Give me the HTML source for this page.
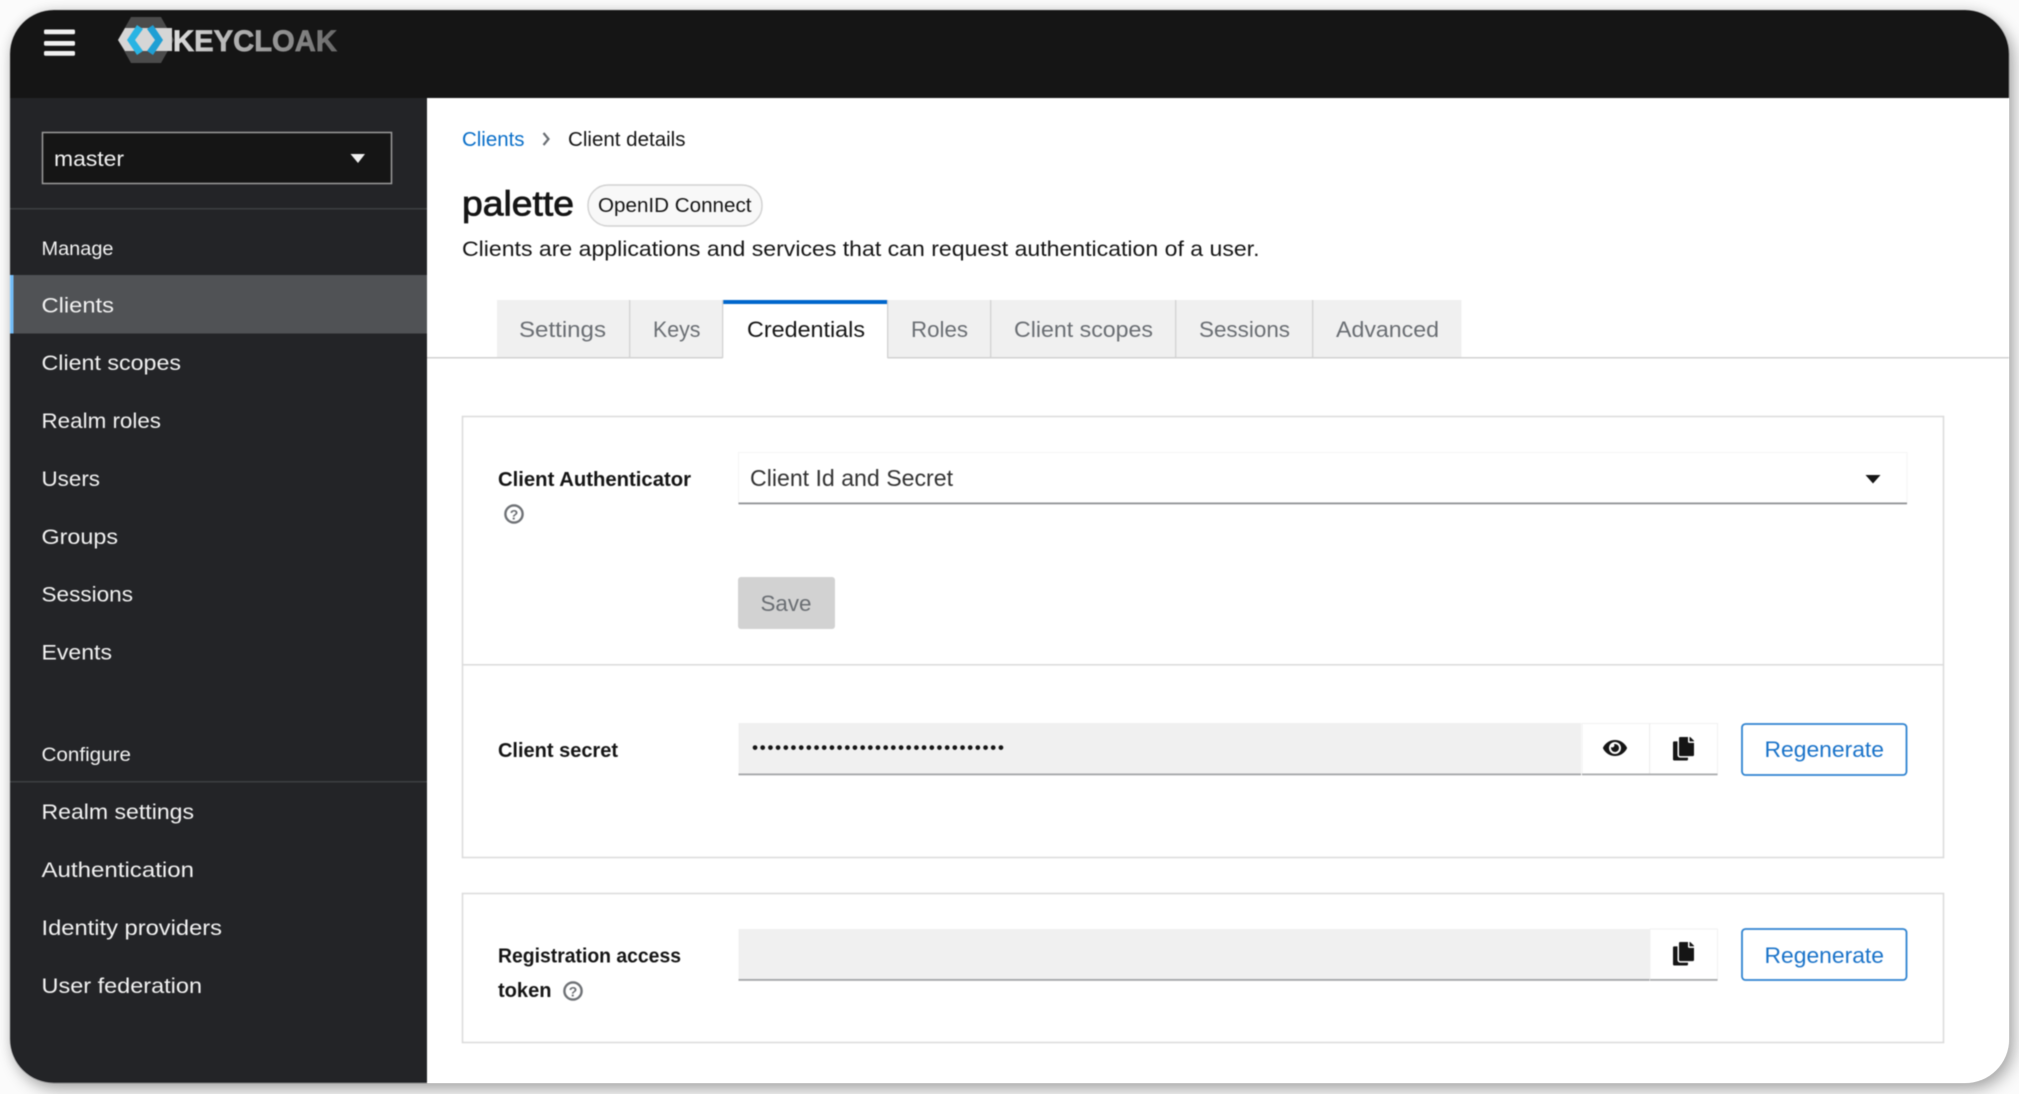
<!DOCTYPE html>
<html><head><meta charset="utf-8"><title>Keycloak client credentials</title>
<style>
html,body{margin:0;padding:0;width:2019px;height:1094px;background:#fbfbfb;overflow:hidden}
#shadow{position:absolute;left:10px;top:10px;width:1999px;height:1073px;border-radius:44px;background:#fff;box-shadow:5px 7px 16px rgba(0,0,0,.3),0 0 12px rgba(0,0,0,.1)}
svg{position:absolute;left:0;top:0;filter:blur(.4px)}
text{font-family:"Liberation Sans",sans-serif;font-size:21.5px}
.n{fill:#f2f2f2}.t{fill:#6a6e73}.b{font-weight:700;font-size:20px;fill:#151515}.d{fill:#151515}
</style></head><body>
<div id="shadow"></div>
<svg width="2019" height="1094" viewBox="0 0 2019 1094" xmlns="http://www.w3.org/2000/svg">
<defs>
<clipPath id="win"><rect x="10" y="10" width="1999" height="1073" rx="44"/></clipPath>
<linearGradient id="kc" gradientUnits="userSpaceOnUse" x1="173" y1="0" x2="337" y2="0"><stop offset="0" stop-color="#dcdcdc"/><stop offset="1" stop-color="#6a6a6a"/></linearGradient>
<path id="copy" d="M320 448v40c0 13.255-10.745 24-24 24H24c-13.255 0-24-10.745-24-24V120c0-13.255 10.745-24 24-24h72v296c0 30.879 25.121 56 56 56h168zm0-344V0H152c-13.255 0-24 10.745-24 24v368c0 13.255 10.745 24 24 24h272c13.255 0 24-10.745 24-24V128H344c-13.2 0-24-10.8-24-24zm120.971-31.029L375.029 7.029A24 24 0 0 0 358.059 0H352v96h96v-6.059a24 24 0 0 0-7.029-16.97z"/>
</defs>
<g clip-path="url(#win)">
<rect x="10" y="10" width="1999" height="1073" fill="#fff"/>
<rect x="10" y="10" width="1999" height="88" fill="#151515"/>
<rect x="10" y="98" width="417" height="985" fill="#232427"/>

<!-- hamburger -->
<rect x="44" y="29.5" width="31" height="4.8" rx="1.5" fill="#f0f0f0"/>
<rect x="44" y="41" width="31" height="4.8" rx="1.5" fill="#f0f0f0"/>
<rect x="44" y="51" width="31" height="4.8" rx="1.5" fill="#f0f0f0"/>

<!-- logo -->
<polygon points="118,40 131,17 161,17 174,40 161,63 131,63" fill="#4b4b4b"/>
<polygon points="118,40 125,28 172,28 172,51 125,51" fill="#d6d6d6"/>
<polygon points="127,40 137,25 143,29 135,40 143,51 137,55" fill="#29b4e3"/>
<polygon points="163,40 153,25 147,29 155,40 147,51 153,55" fill="#1f9fd4"/>
<text x="173" y="51" font-weight="700" stroke="url(#kc)" stroke-width=".7" style="font-size:30px" fill="url(#kc)" textLength="164" lengthAdjust="spacingAndGlyphs">KEYCLOAK</text>

<!-- realm select -->
<rect x="42.5" y="132.5" width="349" height="51" fill="#151515" stroke="#9c9c9c" stroke-width="1.5"/>
<text class="n" x="54" y="166" textLength="70" lengthAdjust="spacingAndGlyphs">master</text>
<polygon points="350.5,154 365,154 358,163" fill="#f0f0f0"/>
<rect x="10" y="208" width="417" height="1.5" fill="#3c3f42"/>
<text class="n" x="41.5" y="255" style="font-size:19.5px" textLength="72" lengthAdjust="spacingAndGlyphs">Manage</text>

<!-- nav -->
<rect x="10" y="275" width="417" height="58.5" fill="#505255"/>
<rect x="10" y="275" width="3.5" height="58.5" fill="#73bcf7"/>
<text class="n" x="41.5" y="312.5" textLength="72.5" lengthAdjust="spacingAndGlyphs">Clients</text>
<text class="n" x="41.5" y="370" textLength="139.5" lengthAdjust="spacingAndGlyphs">Client scopes</text>
<text class="n" x="41.5" y="428" textLength="119.5" lengthAdjust="spacingAndGlyphs">Realm roles</text>
<text class="n" x="41.5" y="486" textLength="58.5" lengthAdjust="spacingAndGlyphs">Users</text>
<text class="n" x="41.5" y="544" textLength="76.5" lengthAdjust="spacingAndGlyphs">Groups</text>
<text class="n" x="41.5" y="601.5" textLength="91.5" lengthAdjust="spacingAndGlyphs">Sessions</text>
<text class="n" x="41.5" y="659.5" textLength="70.5" lengthAdjust="spacingAndGlyphs">Events</text>
<text class="n" x="41.5" y="761" style="font-size:19.5px" textLength="89.5" lengthAdjust="spacingAndGlyphs">Configure</text>
<rect x="10" y="781" width="417" height="1.5" fill="#3c3f42"/>
<text class="n" x="41.5" y="819" textLength="152.5" lengthAdjust="spacingAndGlyphs">Realm settings</text>
<text class="n" x="41.5" y="877" textLength="152.5" lengthAdjust="spacingAndGlyphs">Authentication</text>
<text class="n" x="41.5" y="935" textLength="180.5" lengthAdjust="spacingAndGlyphs">Identity providers</text>
<text class="n" x="41.5" y="993" textLength="160.5" lengthAdjust="spacingAndGlyphs">User federation</text>

<!-- breadcrumb -->
<text x="462" y="146" fill="#0a6fc9" style="font-size:20.5px" textLength="62.5" lengthAdjust="spacingAndGlyphs">Clients</text>
<polyline points="543.5,133 548.5,139 543.5,145" fill="none" stroke="#6a6e73" stroke-width="2.2"/>
<text class="d" x="568" y="146" style="font-size:20.5px" textLength="117.5" lengthAdjust="spacingAndGlyphs">Client details</text>

<!-- title -->
<text class="d" x="462" y="215.5" style="font-size:35px" stroke="#151515" stroke-width=".8" textLength="112" lengthAdjust="spacingAndGlyphs">palette</text>
<rect x="588" y="185" width="174" height="41" rx="20" fill="#f8f8f8" stroke="#d2d2d2" stroke-width="1.5"/>
<text class="d" x="598" y="212" style="font-size:20.5px" textLength="153.5" lengthAdjust="spacingAndGlyphs">OpenID Connect</text>
<text x="462" y="256" fill="#151515" textLength="797.5" lengthAdjust="spacingAndGlyphs">Clients are applications and services that can request authentication of a user.</text>

<!-- tabs -->
<rect x="427" y="357" width="1582" height="1.5" fill="#d2d2d2"/>
<rect x="497" y="300" width="964.5" height="57" fill="#f0f0f0"/>
<rect x="722.5" y="300" width="165" height="59" fill="#fff"/>
<rect x="722.5" y="300" width="165" height="4" fill="#0066cc"/>
<g fill="#d2d2d2">
<rect x="629" y="300" width="1.3" height="57"/>
<rect x="722" y="300" width="1.3" height="58"/>
<rect x="887" y="300" width="1.3" height="58"/>
<rect x="990" y="300" width="1.3" height="57"/>
<rect x="1175" y="300" width="1.3" height="57"/>
<rect x="1312" y="300" width="1.3" height="57"/>
</g>
<text class="t" x="519" y="337" style="font-size:22.5px" textLength="87" lengthAdjust="spacingAndGlyphs">Settings</text>
<text class="t" x="653" y="337" style="font-size:22.5px" textLength="47.5" lengthAdjust="spacingAndGlyphs">Keys</text>
<text class="d" x="747" y="337" style="font-size:22.5px" textLength="118" lengthAdjust="spacingAndGlyphs">Credentials</text>
<text class="t" x="911" y="337" style="font-size:22.5px" textLength="57" lengthAdjust="spacingAndGlyphs">Roles</text>
<text class="t" x="1014" y="337" style="font-size:22.5px" textLength="139" lengthAdjust="spacingAndGlyphs">Client scopes</text>
<text class="t" x="1199" y="337" style="font-size:22.5px" textLength="91" lengthAdjust="spacingAndGlyphs">Sessions</text>
<text class="t" x="1336" y="337" style="font-size:22.5px" textLength="103" lengthAdjust="spacingAndGlyphs">Advanced</text>

<!-- card 1 -->
<rect x="462.5" y="416.5" width="1481" height="441" fill="#fff" stroke="#dcdcdc" stroke-width="1.6"/>
<rect x="462.5" y="664" width="1481" height="1.6" fill="#dcdcdc"/>
<text class="b" x="498" y="486" textLength="193" lengthAdjust="spacingAndGlyphs">Client Authenticator</text>
<circle cx="514" cy="514" r="8.6" fill="none" stroke="#6f7276" stroke-width="2.4"/>
<text x="514" y="519.5" text-anchor="middle" font-weight="700" style="font-size:14px" fill="#6f7276">?</text>
<rect x="738.5" y="452.5" width="1168.5" height="51" fill="#fff" stroke="#f5f5f5"/>
<rect x="738.5" y="502.5" width="1168.5" height="1.8" fill="#8f9194"/>
<text x="750" y="486" fill="#333" style="font-size:23px" textLength="203" lengthAdjust="spacingAndGlyphs">Client Id and Secret</text>
<polygon points="1865.5,475 1880.5,475 1873,483.5" fill="#151515"/>
<rect x="738" y="577" width="97" height="52" rx="3" fill="#d2d2d2"/>
<text x="760.5" y="611" fill="#6a6e73" style="font-size:22.5px" textLength="51" lengthAdjust="spacingAndGlyphs">Save</text>

<text class="b" x="498" y="757" textLength="120" lengthAdjust="spacingAndGlyphs">Client secret</text>
<rect x="738.5" y="723" width="842.5" height="51" fill="#f0f0f0"/>
<rect x="738.5" y="773.5" width="842.5" height="1.8" fill="#a3a5a7"/>
<text x="752" y="753.5" fill="#151515" style="font-size:17.5px" textLength="252" lengthAdjust="spacing">•••••••••••••••••••••••••••••••••</text>
<rect x="1582" y="723.5" width="135.5" height="51" fill="#fff" stroke="#f1f1f1"/>
<rect x="1649" y="723.5" width="1.2" height="51" fill="#eeeeee"/>
<rect x="1582" y="773.5" width="135.5" height="1.8" fill="#a9abad"/>
<svg x="1603" y="735" width="24" height="26" viewBox="0 0 576 512" preserveAspectRatio="xMidYMid meet"><path fill="#151515" d="M572.52 241.4C518.29 135.59 410.93 64 288 64S57.68 135.64 3.48 241.41a32.35 32.35 0 0 0 0 29.19C57.71 376.41 165.07 448 288 448s230.32-71.64 284.52-177.41a32.35 32.35 0 0 0 0-29.19zM288 400a144 144 0 1 1 144-144 143.93 143.93 0 0 1-144 144zm0-240a95.31 95.31 0 0 0-25.31 3.79 47.85 47.85 0 0 1-66.9 66.9A95.78 95.78 0 1 0 288 160z"/></svg>
<svg x="1673" y="737" width="21" height="23.5" viewBox="0 0 448 512" preserveAspectRatio="none"><use href="#copy" fill="#151515"/></svg>
<rect x="1742" y="724" width="164.5" height="51" rx="3.5" fill="#fff" stroke="#2f83d0" stroke-width="1.8"/>
<text x="1764.5" y="757" fill="#1a73c9" style="font-size:22.5px" textLength="119.5" lengthAdjust="spacingAndGlyphs">Regenerate</text>

<!-- card 2 -->
<rect x="462.5" y="893.5" width="1481" height="149" fill="#fff" stroke="#dcdcdc" stroke-width="1.6"/>
<text class="b" x="498" y="962.5" textLength="183" lengthAdjust="spacingAndGlyphs">Registration access</text>
<text class="b" x="498" y="997" textLength="53.5" lengthAdjust="spacingAndGlyphs">token</text>
<circle cx="573" cy="991" r="8.6" fill="none" stroke="#6f7276" stroke-width="2.4"/>
<text x="573" y="996.5" text-anchor="middle" font-weight="700" style="font-size:14px" fill="#6f7276">?</text>
<rect x="738.5" y="929" width="911" height="51" fill="#f0f0f0"/>
<rect x="738.5" y="979" width="911" height="1.8" fill="#a3a5a7"/>
<rect x="1650" y="929" width="67.5" height="51" fill="#fff" stroke="#f1f1f1"/>
<rect x="1650" y="979" width="67.5" height="1.8" fill="#a9abad"/>
<svg x="1673" y="942" width="21" height="23.5" viewBox="0 0 448 512" preserveAspectRatio="none"><use href="#copy" fill="#151515"/></svg>
<rect x="1742" y="929" width="164.5" height="51" rx="3.5" fill="#fff" stroke="#2f83d0" stroke-width="1.8"/>
<text x="1764.5" y="963" fill="#1a73c9" style="font-size:22.5px" textLength="119.5" lengthAdjust="spacingAndGlyphs">Regenerate</text>
</g>
</svg>
</body></html>
